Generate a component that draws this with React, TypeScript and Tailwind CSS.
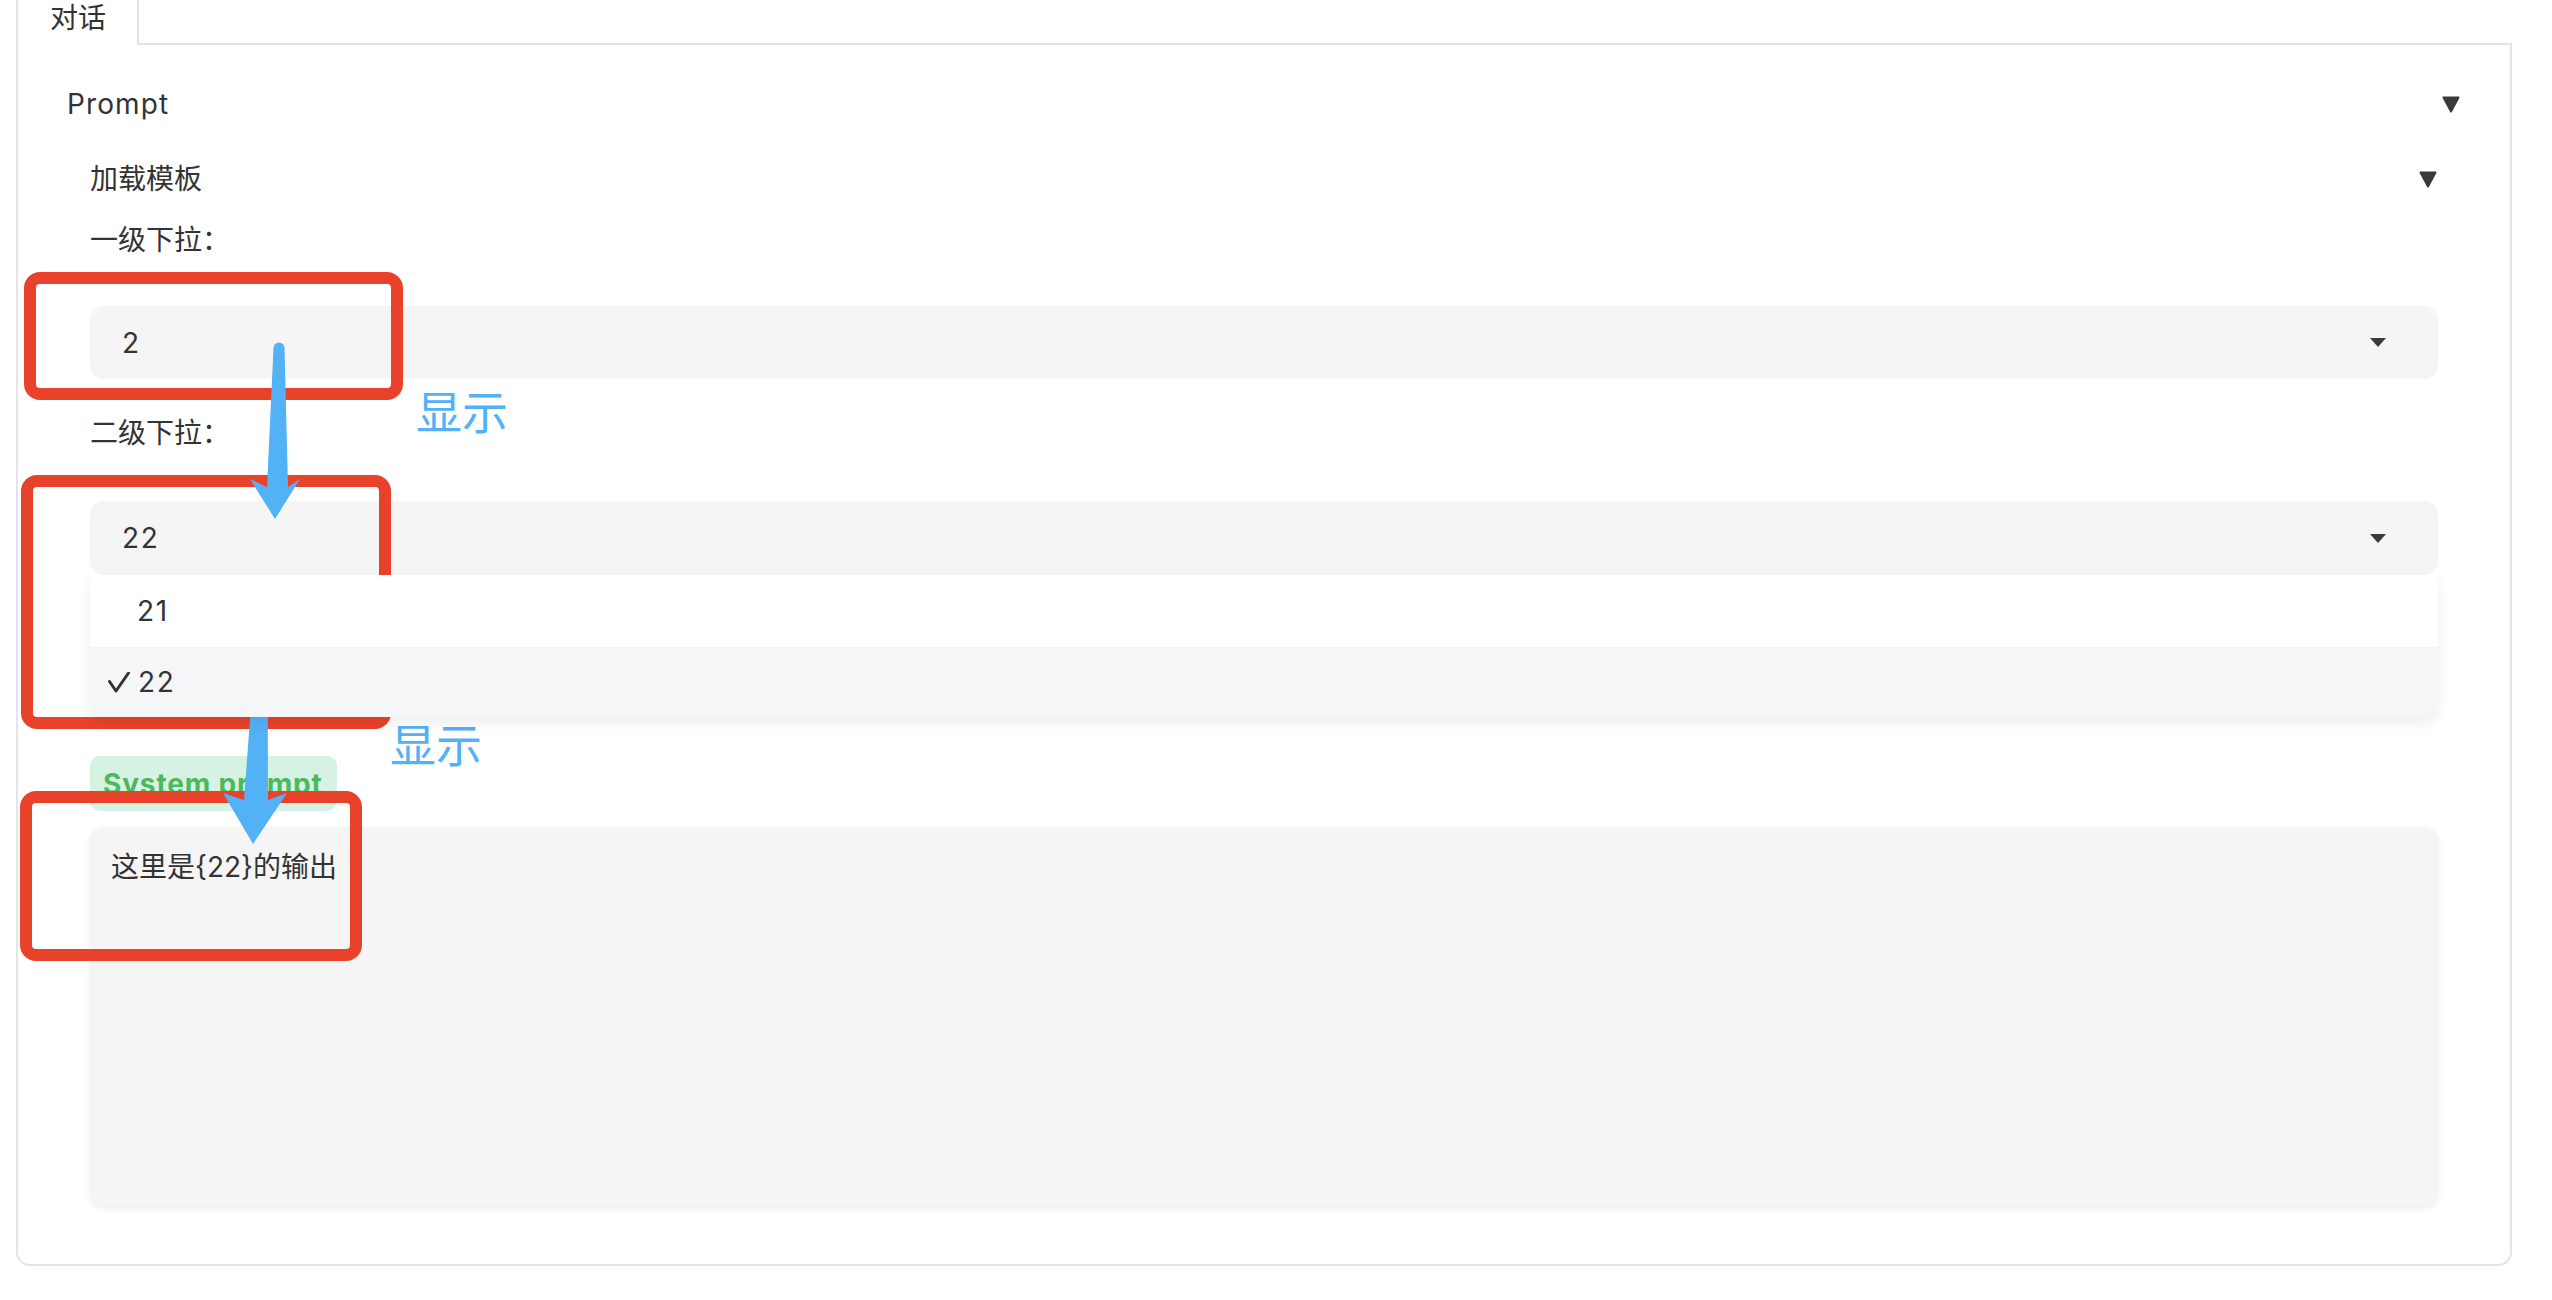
import React from "react";

function AccordionArrow() {
  return (
    <svg width="18" height="17" viewBox="0 0 18 17">
      <path d="M1.5 1.5h15L9 15.5z" fill="#3a3a3a" stroke="#3a3a3a" strokeWidth="2" strokeLinejoin="round" />
    </svg>
  );
}

function SelectCaret() {
  return (
    <svg width="16" height="9" viewBox="0 0 16 9">
      <path d="M0 0h16L8 9z" fill="#3a3a3a" />
    </svg>
  );
}

function Select({ value }: { value: string }) {
  return (
    <div className="flex h-full items-center justify-between rounded-[14px] bg-[#f5f5f5] pl-[32px] pr-[52px]">
      <span className="leading-[40px] tracking-[0.06em]">{value}</span>
      <SelectCaret />
    </div>
  );
}

function Annotations() {
  return (
    <>
      {/* red boxes */}
      <div className="absolute left-[24px] top-[272px] h-[128px] w-[379px] rounded-[16px] border-[12px] border-[#e9422a]" />
      <div className="absolute left-[21px] top-[475px] h-[254px] w-[370px] rounded-[16px] border-[12px] border-[#e9422a]" />
      <div className="absolute left-[20px] top-[791px] h-[170px] w-[342px] rounded-[16px] border-[12px] border-[#e9422a]" />

      {/* blue arrows */}
      <svg className="pointer-events-none absolute left-0 top-0" width="2552" height="1300">
        <g fill="#53b1f6">
          <circle cx="279" cy="348" r="5.5" />
          <path d="M273.5 348 L267 487 L250 479 L275 519 L300 479 L288 487 L284.5 348 Z" />
          <circle cx="261.5" cy="646" r="6" />
          <path d="M255.5 646 L244 800 L223 793 L253 844 L287 793 L268 800 L267.5 646 Z" />
        </g>
      </svg>

      <div className="absolute left-[416px] top-[389px] text-[46px] leading-none text-[#53b1f6]">显示</div>
      <div className="absolute left-[390px] top-[722px] text-[46px] leading-none text-[#53b1f6]">显示</div>
    </>
  );
}

export default function App() {
  return (
    <div className="relative h-[1300px] w-[2552px] overflow-hidden bg-white font-['Inter','Noto_Sans_CJK_SC',sans-serif] text-[28px] text-[#333]">
      <div className="ml-[16px] w-[2496px]">
        {/* tabs */}
        <div className="flex h-[45px]">
          <div className="w-[123px] border-x-2 border-[#e4e4e7] pl-[32px] leading-[36px]">对话</div>
          <div className="flex-1 border-b-2 border-[#e4e4e7]" />
        </div>

        <div className="h-[1221px] rounded-b-[14px] border-x-2 border-b-2 border-[#e4e4e7] pt-[39px]">
          {/* Prompt accordion */}
          <div className="flex h-[40px] items-center justify-between pl-[49px] pr-[50px]">
            <span className="leading-[40px] tracking-[0.04em]">Prompt</span>
            <AccordionArrow />
          </div>

          <div className="px-[49px]">
            <div className="px-[23px]">
              <div className="mt-[35px] flex h-[40px] items-center justify-between pr-[1px]">
                <span className="leading-[40px]">加载模板</span>
                <AccordionArrow />
              </div>

              <div className="mt-[21px] h-[40px] leading-[40px]">一级下拉：</div>
              <div className="mt-[46px] h-[73px]">
                <Select value="2" />
              </div>

              <div className="mt-[34px] h-[40px] leading-[40px]">二级下拉：</div>
              <div className="relative mt-[48px] h-[74px]">
                <Select value="22" />
                <div className="absolute left-0 right-0 top-full z-10 rounded-b-[14px] bg-white shadow-[0_6px_14px_rgba(0,0,0,0.07)]">
                  <div className="flex h-[72px] items-center pl-[47px] tracking-[0.06em]">21</div>
                  <div className="flex h-[70px] items-center rounded-b-[14px] bg-[#f5f6f8] pl-[18px]">
                    <svg width="22" height="21" viewBox="0 0 22 21" className="mr-[8px]">
                      <path d="M1.5 9.5 L8 19 L20.5 1" fill="none" stroke="#333" strokeWidth="3" strokeLinecap="round" strokeLinejoin="round" />
                    </svg>
                    <span className="tracking-[0.06em]">22</span>
                  </div>
                </div>
              </div>
            </div>

            {/* System prompt textbox */}
            <div className="mt-[160px] h-[489px] rounded-[14px] border border-[#fcfcfc] px-[22px] pt-[20px]">
              <div className="flex h-[55px] w-[247px] items-center rounded-[10px] bg-[#d6f2e2] pl-[13px] font-bold tracking-[0.03em] text-[#4cb95c]">
                System prompt
              </div>
              <div className="mt-[16px] h-[379px] rounded-[14px] bg-[#f5f5f5] px-[21px] pt-[19px] shadow-[0_3px_6px_rgba(0,0,0,0.07)]">
                <span className="leading-[40px]">这里是{"{22}"}的输出</span>
              </div>
            </div>
          </div>
        </div>
      </div>

      <Annotations />
    </div>
  );
}
